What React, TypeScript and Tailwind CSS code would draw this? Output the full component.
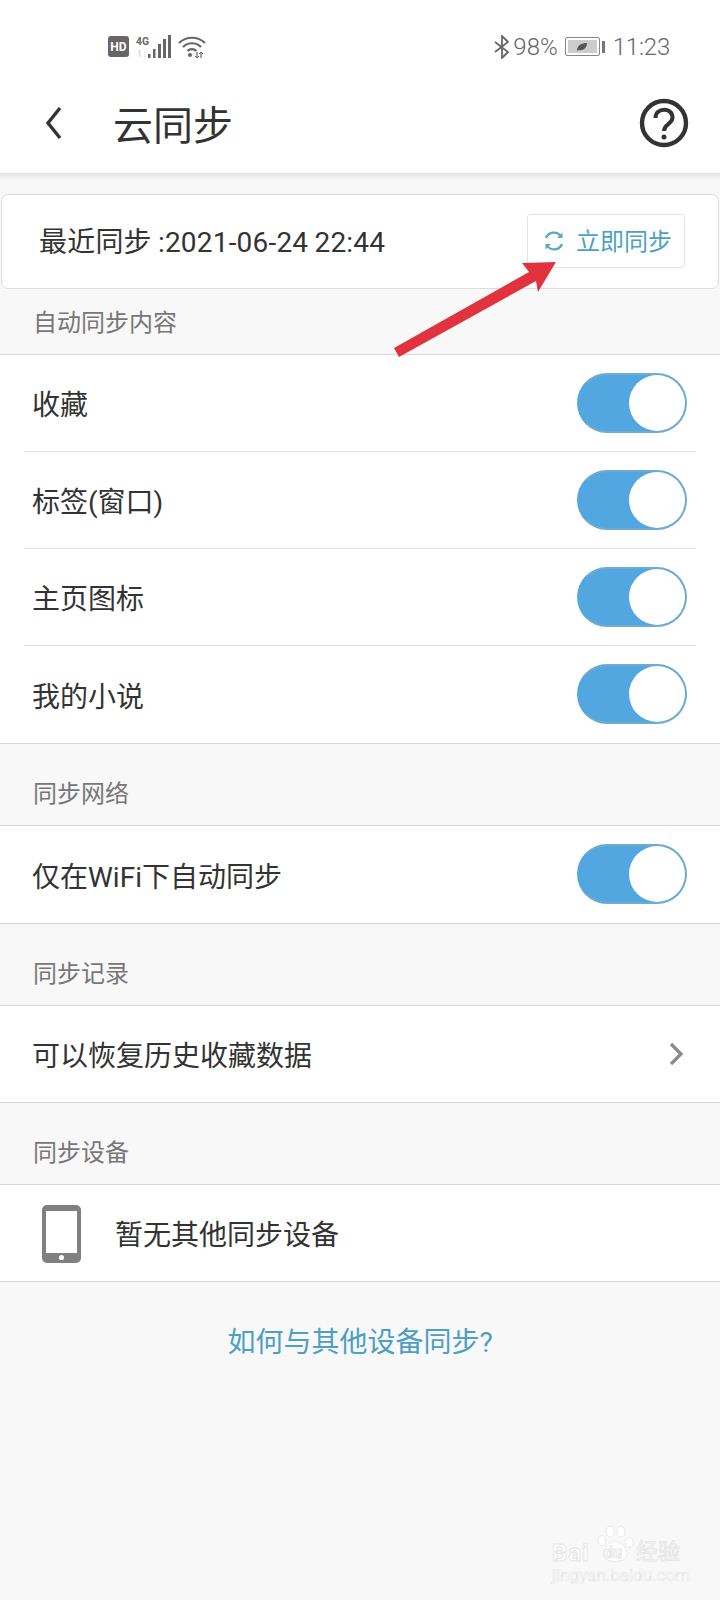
import React from "react";

function Toggle() {
  return (
    <div className="-mt-[1px] w-[110px] h-[60px] rounded-full bg-[#52a7e0] relative shrink-0 border-2 border-[#6eaccf] border-l-[#52a7e0]">
      <div className="absolute right-0 top-0 w-[56px] h-[56px] rounded-full bg-white" />
    </div>
  );
}

function Section({ title, height = "h-[81px]", pt = "pt-[34px]" }: { title: string; height?: string; pt?: string }) {
  return (
    <div className={`${height} ${pt} pl-[33px] text-[24px] leading-[32px] text-[#777777]`}>{title}</div>
  );
}

function ToggleRow({ label, divider }: { label: string; divider?: boolean }) {
  return (
    <div className="h-[97px] pl-[24px] pr-[24px]">
      <div className={`h-full flex items-center justify-between pl-[9px] pr-[9px] ${divider ? "border-b border-[#e2e2e2]" : ""}`}>
        <span className="text-[28px] text-[#333333] -ml-px pt-[6px]">{label}</span>
        <Toggle />
      </div>
    </div>
  );
}

function Signal() {
  return (
    <svg width="40" height="24" viewBox="0 0 40 24" className="shrink-0">
      <text x="0" y="9.5" fontSize="11" fontWeight="700" fill="#666" fontFamily="Roboto, sans-serif" textLength="13" lengthAdjust="spacingAndGlyphs">4G</text>
      <text x="1" y="22" fontSize="9" fill="#c8c8c8" fontFamily="Roboto, sans-serif">1↓</text>
      <rect x="12" y="19" width="2.5" height="4" fill="#666" />
      <rect x="17" y="14" width="2.5" height="9" fill="#666" />
      <rect x="22" y="9" width="3" height="14" fill="#666" />
      <rect x="27" y="4" width="3" height="19" fill="#666" />
      <rect x="32" y="0" width="3" height="23" fill="#666" />
    </svg>
  );
}

function Wifi() {
  return (
    <svg width="28" height="24" viewBox="0 0 28 24" fill="none" stroke="#666" strokeWidth="2.2" className="shrink-0 ml-[-5px]">
      <path d="M1 8 C8 1 20 1 27 8" />
      <path d="M5 12 C10 7 18 7 23 12" />
      <path d="M9.5 16 C12 13.5 16 13.5 18.5 16" />
      <circle cx="12" cy="20" r="2" fill="#666" stroke="none" />
      <path d="M19 17 V23 M23 17 V23" strokeWidth="1.2" />
      <path d="M17 21 L19 23 L21 21 M21 19 L23 17 L25 19" strokeWidth="1" />
    </svg>
  );
}

export default function App() {
  return (
    <div
      className="relative w-[720px] h-[1600px] overflow-hidden bg-[#f8f8f8] text-[#333333]"
      style={{ fontFamily: 'Roboto, "Noto Sans CJK SC", sans-serif' }}
    >
      {/* Header */}
      <div className="h-[173px] bg-white flex flex-col">
        <div className="h-[84px] flex items-center pl-[108px] pr-[50px] pt-[9px]">
          <div className="flex items-center gap-[7px]">
            <div className="w-[21px] h-[21px] rounded-[3px] bg-[#666666] text-white text-[12px] font-bold flex items-center justify-center leading-none">HD</div>
            <Signal />
            <Wifi />
          </div>
          <div className="ml-auto flex items-center text-[#666666] text-[24px] font-light">
            <svg width="16" height="24" viewBox="0 0 16 24" fill="none" stroke="#666" strokeWidth="1.8">
              <path d="M1 7 L14 17 L8 23 V1 L14 7 L1 17" />
            </svg>
            <span className="ml-[3px]">98%</span>
            <div className="ml-[7px] w-[35px] h-[19px] border border-[#888888] rounded-[2px] p-[2px]">
              <div className="w-full h-full bg-[#cccccc] flex items-center justify-center">
                <svg width="12" height="10" viewBox="0 0 12 10"><path d="M1 9 C1 3 6 1 11 1 C11 6 7 9 3 8 Z" fill="#555" /></svg>
              </div>
            </div>
            <div className="ml-[2px] w-[3px] h-[12px] bg-[#777777]" />
            <span className="ml-[8px] tracking-[-0.2px]">11:23</span>
          </div>
        </div>
        <div className="flex-1 flex items-start relative">
          <svg width="18" height="34" viewBox="0 0 18 34" fill="none" stroke="#333" strokeWidth="3.4" className="ml-[45px] mt-[22px]">
            <path d="M15 2 L3 17 L15 32" />
          </svg>
          <span className="ml-[50px] mt-[18px] text-[40px] leading-[50px] text-[#333333]">云同步</span>
          <svg width="50" height="50" viewBox="0 0 50 50" fill="none" stroke="#333" className="ml-auto mr-[31px] mt-[14px]">
            <circle cx="25" cy="25" r="22" strokeWidth="4.4" />
            <path d="M16.5 20 C16.5 9 33.5 9 33.5 19.5 C33.5 26 25 26 25 33" strokeWidth="4" />
            <circle cx="25" cy="39" r="2.5" fill="#333" stroke="none" />
          </svg>
        </div>
      </div>
      <div className="h-[7px] bg-gradient-to-b from-[#e3e3e3] to-[#f8f8f8]" />

      {/* Sync card */}
      <div className="mt-[14px] mx-px h-[95px] bg-white border border-[#dddddd] rounded-[7px] flex items-center pl-[37px] pr-[33px]">
        <span className="text-[28px] tracking-[0.2px] [word-spacing:-1px] text-[#333333] pt-[3px]">最近同步 :2021-06-24 22:44</span>
        <div className="ml-auto -mt-[2px] w-[158px] h-[54px] border border-[#e4e4e4] rounded-[3px] flex items-center pl-[16px] text-[24px] text-[#4f9fc2] gap-[12px]">
          <svg width="20" height="22" viewBox="0 0 20 22" fill="none" stroke="#5aa5c8" strokeWidth="2.2" className="shrink-0">
            <path d="M2 8 A8.5 8.5 0 0 1 17 6.5" />
            <path d="M18 14 A8.5 8.5 0 0 1 3 15.5" />
            <path d="M18.5 2.5 V8 H13 Z" strokeWidth="0" fill="#5aa5c8" />
            <path d="M1.5 19.5 V14 H7 Z" strokeWidth="0" fill="#5aa5c8" />
          </svg>
          <span className="pt-[2px]">立即同步</span>
        </div>
      </div>

      {/* Auto sync */}
      <Section title="自动同步内容" height="h-[65px]" pt="pt-[18px]" />
      <div className="bg-white border-y border-[#d6d6d6]">
        <ToggleRow label="收藏" divider />
        <ToggleRow label="标签(窗口)" divider />
        <ToggleRow label="主页图标" divider />
        <ToggleRow label="我的小说" />
      </div>

      <Section title="同步网络" />
      <div className="bg-white border-y border-[#d6d6d6]">
        <ToggleRow label="仅在WiFi下自动同步" />
      </div>

      <Section title="同步记录" />
      <div className="bg-white border-y border-[#d6d6d6] h-[98px] flex items-center justify-between pl-[32px] pr-[36px]">
        <span className="text-[28px] pt-[5px]">可以恢复历史收藏数据</span>
        <svg width="16" height="24" viewBox="0 0 16 24" fill="none" stroke="#8a8a8a" strokeWidth="3.2">
          <path d="M3 2 L13 12 L3 22" />
        </svg>
      </div>

      <Section title="同步设备" />
      <div className="bg-white border-y border-[#d6d6d6] h-[98px] flex items-center pl-[42px]">
        <svg width="39" height="58" viewBox="0 0 39 58" className="shrink-0 mt-[2px]">
          <rect x="0" y="0" width="39" height="58" rx="5" fill="#808080" />
          <rect x="4" y="6" width="31" height="42" fill="#ffffff" />
          <circle cx="19.5" cy="52.5" r="2.6" fill="#ffffff" />
        </svg>
        <span className="ml-[34px] text-[28px] pt-[5px]">暂无其他同步设备</span>
      </div>

      <div className="mt-[41px] text-center text-[28px] leading-[40px] text-[#4d9fc4]">如何与其他设备同步?</div>

      {/* Annotation arrow */}
      <svg width="720" height="400" viewBox="0 0 720 400" className="absolute left-0 top-0 pointer-events-none">
        <polygon points="394,348 399,357 536,281 538,292 556,262 522,263 529,272" fill="#e0333f" />
      </svg>

      {/* Watermark */}
      <div className="absolute left-[552px] top-[1520px] w-[132px] h-[64px] text-white [-webkit-text-stroke:1px_#e6e6e6]">
        <svg width="38" height="44" viewBox="0 0 46 44" className="absolute left-[45px] top-[2px]" fill="#ffffff" stroke="#e6e6e6">
          <ellipse cx="6" cy="18" rx="4.5" ry="6" />
          <ellipse cx="16" cy="7" rx="5" ry="6.5" />
          <ellipse cx="29" cy="7" rx="5" ry="6.5" />
          <ellipse cx="39" cy="20" rx="5" ry="6" />
          <path d="M22 19 C32 19 40 34 34 40 C28 44 16 44 10 40 C4 34 12 19 22 19 Z" />
        </svg>
        <span className="absolute left-0 top-[21px] text-[24px] leading-[24px] font-bold tracking-[1px]">Bai</span>
        <span className="absolute left-[52px] top-[23px] text-[16px] leading-[20px] font-bold">du</span>
        <span className="absolute left-[84px] top-[20px] text-[22px] leading-[24px] whitespace-nowrap">经验</span>
        <span className="absolute left-0 top-[46px] text-[17px] leading-[18px] whitespace-nowrap [-webkit-text-stroke:0.6px_#e6e6e6]">jingyan.baidu.com</span>
      </div>
    </div>
  );
}
